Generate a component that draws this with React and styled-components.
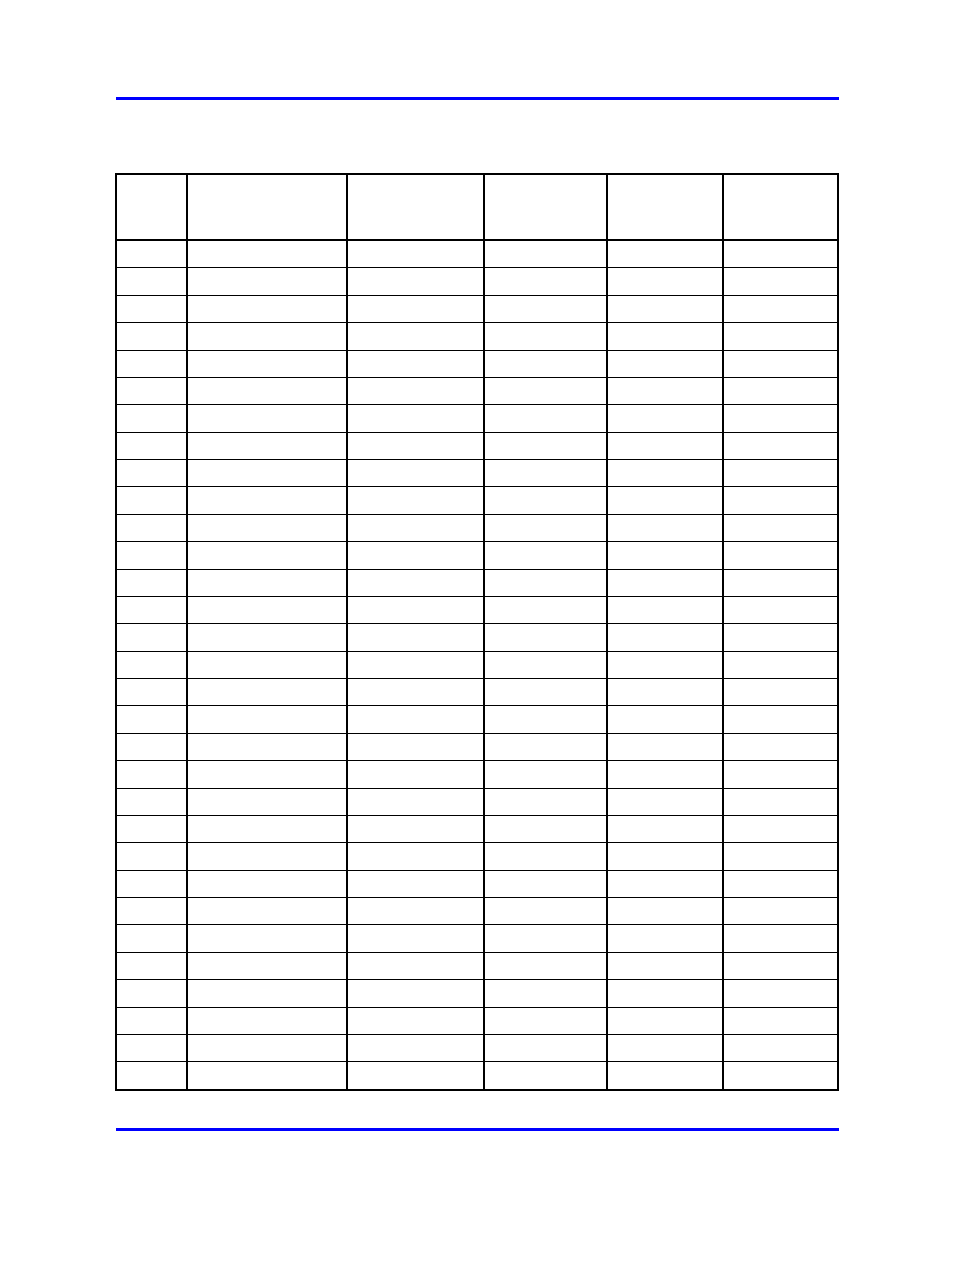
import styled, { createGlobalStyle } from "styled-components"

const GlobalStyle = createGlobalStyle`
  html, body {
    margin: 0;
    padding: 0;
    background: #ffffff;
    font-family: "Liberation Sans", Arial, sans-serif;
  }
`

const Page = styled.div`
  width: 954px;
  height: 1272px;
  box-sizing: border-box;
  padding: 97px 0 0 115px;
  display: flex;
  flex-direction: column;
`

const Rule = styled.div`
  margin-left: 1px;
  width: 723px;
  height: 3px;
  background: #0000ff;
  margin-top: ${(p) => p.$top || 0}px;
`

const Table = styled.div`
  margin-top: 73px;
  width: 724px;
  box-sizing: border-box;
  border: 2px solid #000;
  display: flex;
  flex-direction: column;
`

const COLS = "71px 160px 137px 123px 116px 113px"

const HeaderRow = styled.div`
  display: grid;
  grid-template-columns: ${COLS};
  height: 66px;
  box-sizing: border-box;
  border-bottom: 2px solid #000;
`

const Row = styled.div`
  display: grid;
  grid-template-columns: ${COLS};
  height: ${(p) => (p.$first ? 26.39 : 27.39)}px;
  box-sizing: border-box;
  border-top: ${(p) => (p.$first ? "none" : "1px solid #000")};
`

const Cell = styled.div`
  box-sizing: border-box;
  border-right: 2px solid #000;
  &:last-child {
    border-right: none;
  }
`

const cols = [0, 1, 2, 3, 4, 5]
const rows = Array.from({ length: 31 }, (_, i) => i)

export default function App() {
  return (
    <Page>
      <GlobalStyle />
      <Rule />
      <Table>
        <HeaderRow>
          {cols.map((c) => (
            <Cell key={c} />
          ))}
        </HeaderRow>
        {rows.map((r) => (
          <Row key={r} $first={r === 0}>
            {cols.map((c) => (
              <Cell key={c} />
            ))}
          </Row>
        ))}
      </Table>
      <Rule $top={37} />
    </Page>
  )
}
